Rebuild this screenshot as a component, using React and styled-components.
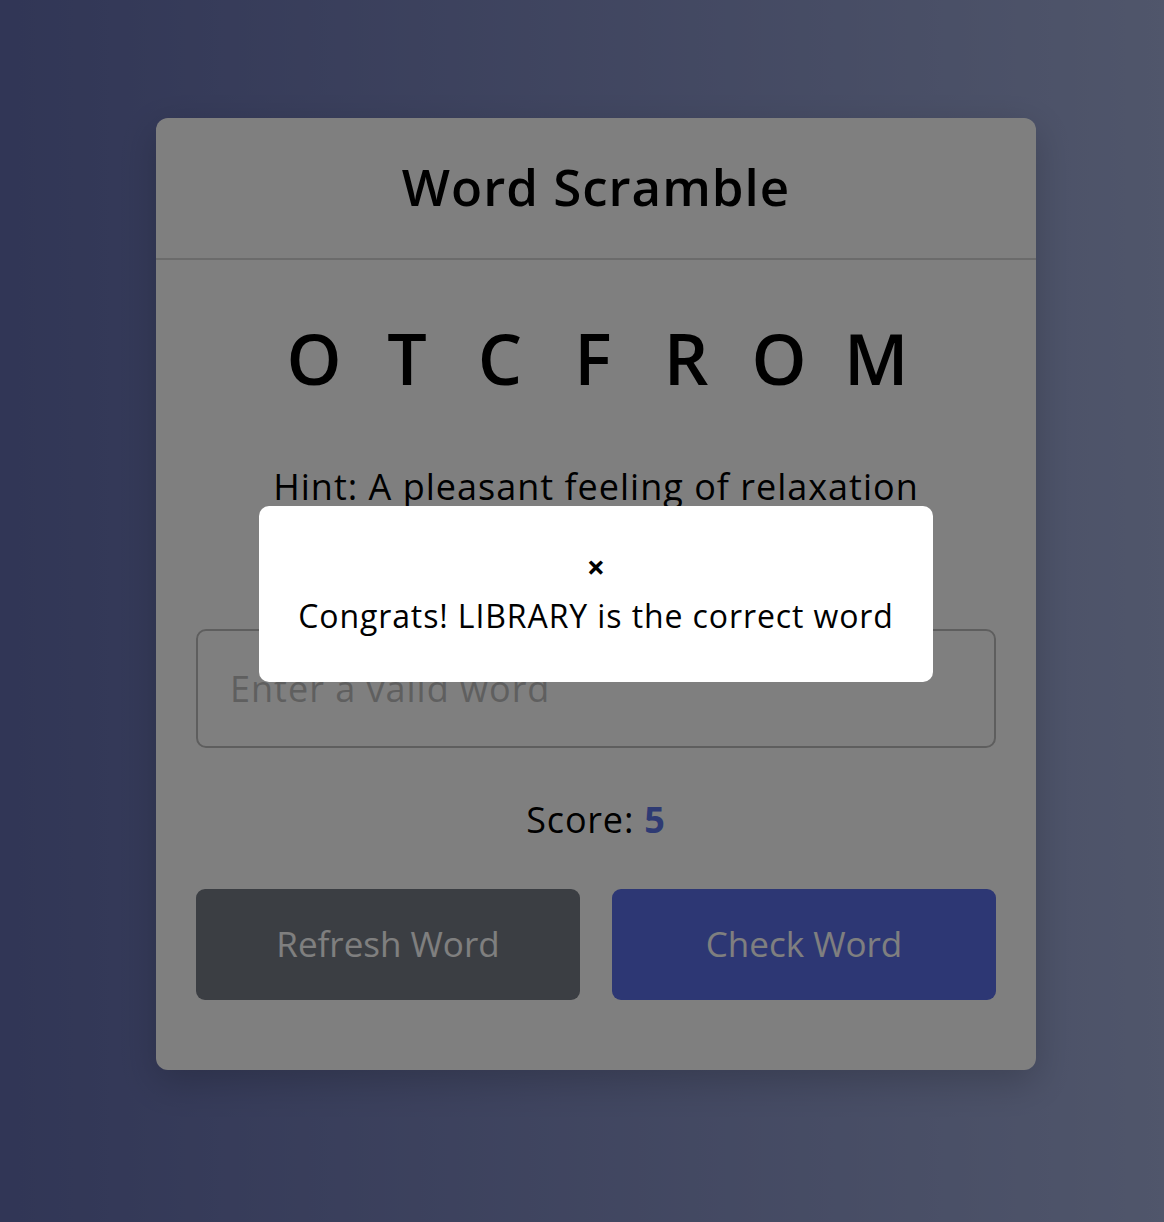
import React from "react";
import styled, { createGlobalStyle } from "styled-components";

const Global = createGlobalStyle`
  html, body { margin: 0; padding: 0; }
  body {
    min-height: 1222px;
    background: linear-gradient(90deg, #626cac 0%, #a0acd6 100%);
    font-family: "Open Sans", "Liberation Sans", sans-serif;
  }
  * { box-sizing: border-box; }
`;

const Dim = styled.div`
  position: fixed;
  inset: 0;
  background: rgba(0, 0, 0, 0.5);
  z-index: 1;
`;

const Page = styled.div`
  padding: 118px 0 152px 156px;
`;

const Card = styled.div`
  position: relative;
  width: 880px;
  background: #ffffff;
  border-radius: 12px;
  box-shadow: 0 12px 36px rgba(0, 0, 0, 0.18);
`;

const Header = styled.header`
  height: 142px;
  padding-bottom: 5px;
  display: flex;
  align-items: center;
  justify-content: center;
  border-bottom: 2px solid #d6d6d6;
`;

const Title = styled.h1`
  margin: 0;
  font-size: 51px;
  font-weight: 600;
  color: #000;
  letter-spacing: 1px;
`;

const Content = styled.div`
  padding: 48px 40px 70px;
  display: flex;
  flex-direction: column;
  align-items: stretch;
`;

const Letters = styled.div`
  display: flex;
  justify-content: center;
  gap: 37px;
  height: 100px;
  align-items: center;
  padding-right: 6px;
`;

const Letter = styled.span`
  font-size: 70px;
  font-weight: 600;
  color: #000;
  width: 56px;
  text-align: center;
`;

const Hint = styled.p`
  margin: 52px 0 0;
  text-align: center;
  font-size: 36px;
  line-height: 54px;
  letter-spacing: 1px;
  color: #000;
`;

const Input = styled.input`
  margin-top: 115px;
  height: 119px;
  width: 100%;
  border: 2px solid #bcbcbc;
  border-radius: 10px;
  padding: 0 32px;
  font-family: inherit;
  font-size: 36px;
  letter-spacing: 1px;
  background: transparent;
  outline: none;
  &::placeholder { color: #bebebe; }
`;

const Score = styled.p`
  margin: 45px 0 0;
  text-align: center;
  font-size: 36px;
  line-height: 54px;
  letter-spacing: 0.8px;
  color: #000;
`;

const ScoreValue = styled.span`
  font-weight: 700;
  color: #5c74e6;
`;

const Buttons = styled.div`
  margin-top: 42px;
  display: grid;
  grid-template-columns: 1fr 1fr;
  gap: 32px;
`;

const Button = styled.button`
  height: 111px;
  padding-bottom: 3px;
  border: none;
  border-radius: 9px;
  font-family: inherit;
  font-size: 35px;
  color: #fff;
  background: ${(p) => (p.$primary ? "#5a6ee8" : "#767c86")};
  cursor: pointer;
`;

const Modal = styled.div`
  position: fixed;
  z-index: 2;
  left: 259px;
  top: 506px;
  width: 674px;
  height: 176px;
  background: #fff;
  border-radius: 10px;
  display: flex;
  flex-direction: column;
  align-items: center;
  padding-top: 46px;
`;

const Close = styled.button`
  border: none;
  background: none;
  padding: 0;
  font-family: inherit;
  font-size: 32px;
  line-height: 30px;
  font-weight: 700;
  color: #000;
  cursor: pointer;
`;

const Message = styled.p`
  margin: 14px 0 0;
  font-size: 32px;
  line-height: 40px;
  letter-spacing: 0.9px;
  color: #000;
`;

export default function App() {
  const letters = ["O", "T", "C", "F", "R", "O", "M"];
  return (
    <>
      <Global />
      <Page>
        <Card>
          <Header>
            <Title>Word Scramble</Title>
          </Header>
          <Content>
            <Letters>
              {letters.map((l, i) => (
                <Letter key={i}>{l}</Letter>
              ))}
            </Letters>
            <Hint>Hint: A pleasant feeling of relaxation</Hint>
            <Input placeholder="Enter a valid word" />
            <Score>
              Score: <ScoreValue>5</ScoreValue>
            </Score>
            <Buttons>
              <Button>Refresh Word</Button>
              <Button $primary>Check Word</Button>
            </Buttons>
          </Content>
        </Card>
      </Page>
      <Dim />
      <Modal>
        <Close aria-label="close">×</Close>
        <Message>Congrats! LIBRARY is the correct word</Message>
      </Modal>
    </>
  );
}
